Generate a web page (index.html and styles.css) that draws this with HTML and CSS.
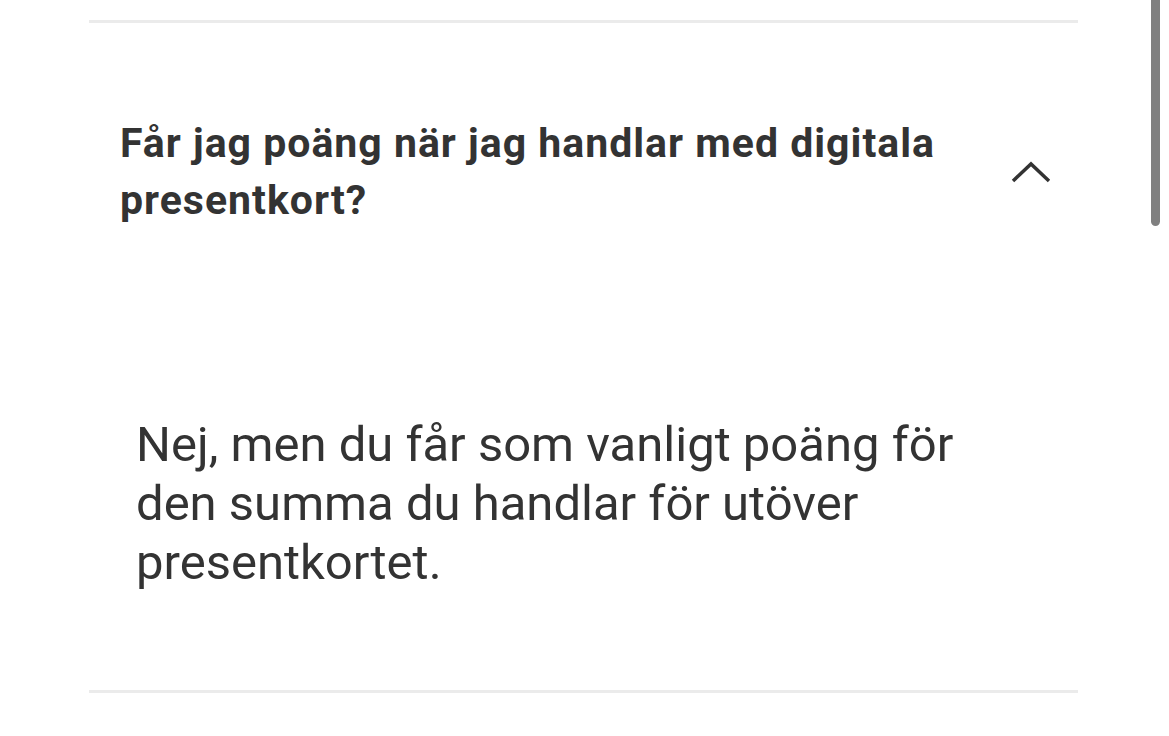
FILE: index.html
```html
<!DOCTYPE html>
<html lang="sv">
<head>
    <meta charset="UTF-8">
    <meta name="viewport" content="width=device-width, initial-scale=1.0">
    <title>Vanliga frågor</title>
    <link rel="stylesheet" href="styles.css">
</head>
<body>
    <div class="faq">
        <div class="faq-item open">
            <button class="faq-question" type="button">
                <span class="faq-title">Får jag poäng när jag handlar med digitala presentkort?</span>
                <svg class="chevron" width="40" height="22" viewBox="0 0 40 22" aria-hidden="true">
                    <polyline points="2,20 20,3 38,20" fill="none" stroke="#333" stroke-width="3.5"/>
                </svg>
            </button>
            <div class="faq-answer">
                <p>Nej, men du får som vanligt poäng för den summa du handlar för utöver presentkortet.</p>
            </div>
        </div>
    </div>

    <!-- scrollbar overlay -->
    <div class="scroll-thumb"></div>
</body>
</html>
```

FILE: styles.css
```css
* {
    margin: 0;
    padding: 0;
    box-sizing: border-box;
}

body {
    font-family: Roboto, 'Liberation Sans', sans-serif;
    background-color: #ffffff;
    color: #333333;
    width: 100vw;
    height: 100vh;
    overflow: hidden;
}

.faq {
    margin-top: 20px;
    margin-left: 89px;
    width: 989px;
}

.faq-item {
    border-top: 3px solid #ebebeb;
    border-bottom: 3px solid #ebebeb;
}

.faq-question {
    width: 100%;
    display: flex;
    align-items: center;
    justify-content: space-between;
    padding: 92px 27px 0 31px;
    background: none;
    border: none;
    text-align: left;
    color: inherit;
    font-family: inherit;
    cursor: pointer;
}

.faq-title {
    font-size: 41px;
    font-weight: 700;
    line-height: 57px;
    letter-spacing: 1px;
    max-width: 880px;
}

.chevron {
    flex-shrink: 0;
}

.faq-answer {
    padding: 186px 47px 98px 47px;
}

.faq-answer p {
    font-size: 49px;
    line-height: 59px;
    font-weight: 400;
}

.scroll-thumb {
    position: absolute;
    top: 0;
    right: 9px;
    width: 9px;
    height: 226px;
    background: #808080;
    border-radius: 0 0 5px 5px;
}
```
